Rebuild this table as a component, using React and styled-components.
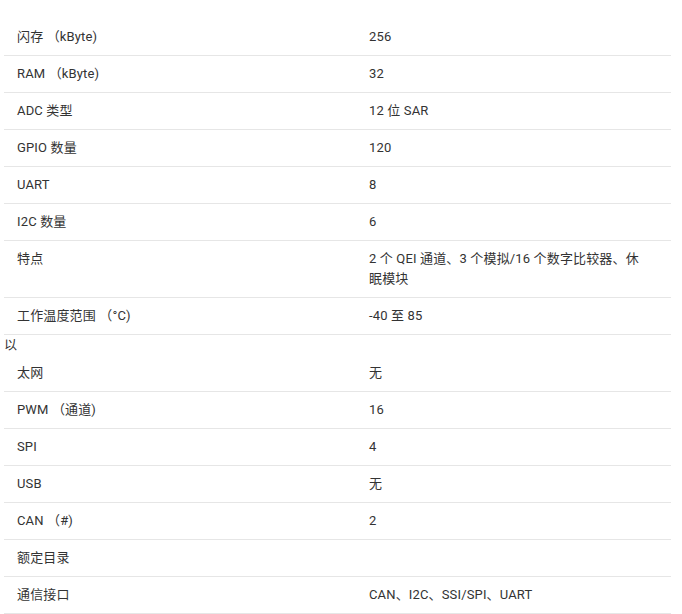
import React from 'react';
import styled, { createGlobalStyle } from 'styled-components';

const GlobalStyle = createGlobalStyle`
  html, body {
    margin: 0;
    padding: 0;
    background: #ffffff;
  }
  body {
    font-family: Roboto, "Noto Sans CJK SC", sans-serif;
    font-size: 13px;
    color: #333333;
  }
`;

const Page = styled.div`
  padding: 19px 11px 0 4px;
`;

const SpecTable = styled.div`
  width: 667px;
  display: flex;
  flex-direction: column;
`;

const Row = styled.div`
  border-bottom: 1px solid #e6e6e6;
`;

const Stray = styled.div`
  line-height: 20px;
`;

const Cells = styled.div`
  display: grid;
  grid-template-columns: 352px 315px;
`;

const Cell = styled.div`
  padding: 8px ${(p) => (p.$value ? '28px' : '13px')} 8px 13px;
  line-height: 20px;
  min-height: 20px;
  letter-spacing: 0.15px;
`;

const specs = [
  { label: '闪存 （kByte)', value: '256' },
  { label: 'RAM （kByte)', value: '32' },
  { label: 'ADC 类型', value: '12 位 SAR' },
  { label: 'GPIO 数量', value: '120' },
  { label: 'UART', value: '8' },
  { label: 'I2C 数量', value: '6' },
  { label: '特点', value: '2 个 QEI 通道、3 个模拟/16 个数字比较器、休眠模块' },
  { label: '工作温度范围 （°C)', value: '-40 至 85' },
  { prefix: '以', label: '太网', value: '无' },
  { label: 'PWM （通道)', value: '16' },
  { label: 'SPI', value: '4' },
  { label: 'USB', value: '无' },
  { label: 'CAN （#)', value: '2' },
  { label: '额定目录', value: '' },
  { label: '通信接口', value: 'CAN、I2C、SSI/SPI、UART' },
];

export default function App() {
  return (
    <>
      <GlobalStyle />
      <Page>
        <SpecTable>
          {specs.map((s) => (
            <Row key={s.label}>
              {s.prefix && <Stray>{s.prefix}</Stray>}
              <Cells>
                <Cell>{s.label}</Cell>
                <Cell $value>{s.value}</Cell>
              </Cells>
            </Row>
          ))}
        </SpecTable>
      </Page>
    </>
  );
}
